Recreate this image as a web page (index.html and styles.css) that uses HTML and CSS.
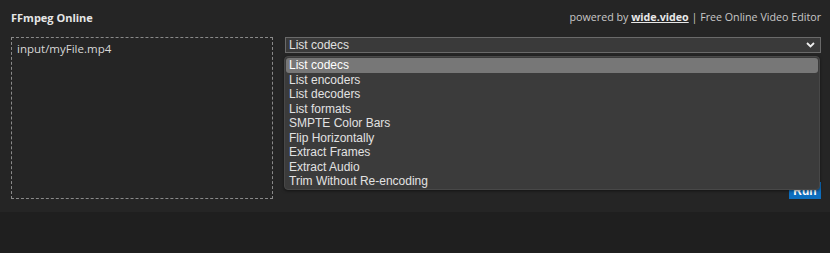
FILE: index.html
```html
<!DOCTYPE html>
<html>
<head>
<meta charset="utf-8">
<link rel="stylesheet" href="styles.css">
</head>
<body>
<div class="panel">
  <header class="header">
    <div class="title">FFmpeg Online</div>
    <div class="credit">powered by <a class="brand" href="#">wide.video</a> | Free Online Video Editor</div>
  </header>
  <div class="main">
    <div class="input">input/myFile.mp4</div>
    <div class="side">
      <div class="select">
        <span>List codecs</span>
        <svg class="chev" width="9" height="6" viewBox="0 0 9 6"><path d="M1 1 L4.5 4.5 L8 1" fill="none" stroke="#eee" stroke-width="1.8"/></svg>
      </div>
      <div class="actions"><button class="run">Run</button></div>
    </div>
  </div>
  <ul class="dropdown">
    <li class="active">List codecs</li>
    <li>List encoders</li>
    <li>List decoders</li>
    <li>List formats</li>
    <li>SMPTE Color Bars</li>
    <li>Flip Horizontally</li>
    <li>Extract Frames</li>
    <li>Extract Audio</li>
    <li>Trim Without Re-encoding</li>
  </ul>
</div>
</body>
</html>
```
FILE: styles.css
```css
html, body {
  margin: 0;
  padding: 0;
  background: #1f1f1f;
}
body {
  font-family: "Open Sans", "Noto Sans", sans-serif;
  color: #dddddd;
}
.panel {
  position: relative;
  background: #252525;
  height: 212px;
  padding: 0 9px 0 11px;
  box-sizing: border-box;
}
.header {
  display: flex;
  justify-content: space-between;
  align-items: center;
  height: 36px;
}
.title {
  font-weight: 700;
  font-size: 11px;
  color: #e6e6e6;
  margin-top: -1px;
}
.credit {
  font-size: 10.7px;
  color: #c8c8c8;
  margin-top: -3px;
}
.brand {
  color: #e8e8e8;
  font-weight: 700;
  text-decoration: underline;
}
.main {
  display: flex;
  gap: 12px;
  margin-top: 1px;
}
.input {
  width: 262px;
  height: 162px;
  box-sizing: border-box;
  border: 1px dashed #8a8a8a;
  padding: 3px 5px;
  font-size: 11.5px;
  color: #d8d8d8;
}
.side {
  flex: 1;
  display: flex;
  flex-direction: column;
  justify-content: space-between;
}
.select {
  height: 16px;
  box-sizing: border-box;
  border: 1px solid #6a6a6a;
  background: #3a3a3a;
  display: flex;
  align-items: center;
  justify-content: space-between;
  padding: 0 5px 0 3px;
  font-family: "Liberation Sans", Arial, sans-serif;
  font-size: 12px;
  color: #e0e0e0;
}
.chev { display: block; }
.actions {
  display: flex;
  justify-content: flex-end;
}
.run {
  background: #0d6ebf;
  color: #ffffff;
  border: none;
  font-family: "Liberation Sans", Arial, sans-serif;
  font-weight: 700;
  font-size: 12px;
  width: 32px;
  height: 17px;
  padding: 0;
}
.dropdown {
  position: absolute;
  left: 284px;
  top: 56px;
  width: 536px;
  height: 134px;
  margin: 0;
  padding: 1px 1px 3px;
  box-sizing: border-box;
  list-style: none;
  background: #3b3b3b;
  border: 1px solid #484848;
  border-radius: 4px;
  box-shadow: 0 1px 3px rgba(0,0,0,0.5);
  font-family: "Liberation Sans", Arial, sans-serif;
  font-size: 12px;
  color: #e2e2e2;
}
.dropdown li {
  height: 14.5px;
  line-height: 14.5px;
  padding-left: 3px;
}
.dropdown li.active {
  background: #777777;
  color: #ffffff;
  border-radius: 3px;
}
```
